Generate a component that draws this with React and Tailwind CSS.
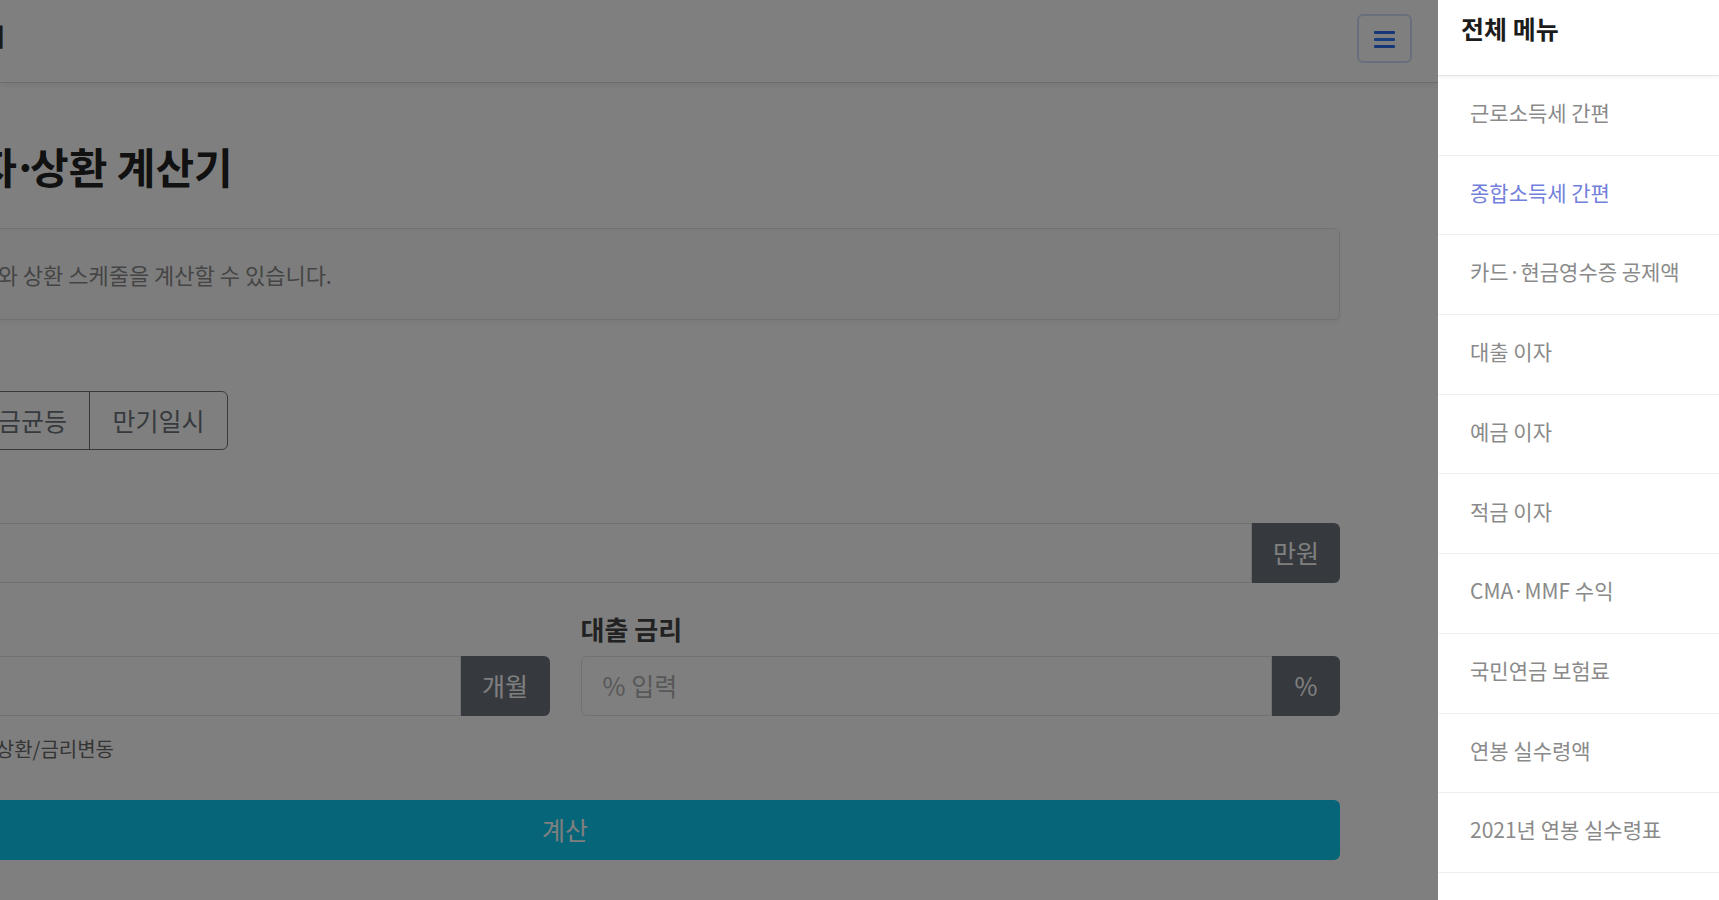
import React from "react";

const menu = [
  "근로소득세 간편",
  "종합소득세 간편",
  "카드·현금영수증 공제액",
  "대출 이자",
  "예금 이자",
  "적금 이자",
  "CMA·MMF 수익",
  "국민연금 보험료",
  "연봉 실수령액",
  "2021년 연봉 실수령표",
];

function Label({ children }) {
  return (
    <div className="mb-[9px] h-[36px] whitespace-nowrap text-[26px] font-bold leading-[36px] text-[#444]">
      {children}
    </div>
  );
}

function InputGroup({ placeholder, unit, unitClass }) {
  return (
    <div className="flex h-[60px] w-full">
      <div className="flex flex-1 items-center rounded-l-md border border-[#dee2e6] bg-white pl-[21px] text-[25px] text-[#b0b0b0]">
        {placeholder}
      </div>
      <div
        className={
          "flex items-center justify-center rounded-r-md bg-[#6c757d] text-[25px] text-white " +
          unitClass
        }
      >
        {unit}
      </div>
    </div>
  );
}

export default function App() {
  return (
    <div className="flex h-[900px] w-full overflow-hidden bg-white font-['Noto_Sans_CJK_KR','Noto_Sans',sans-serif]">
      {/* page under backdrop */}
      <div className="relative min-w-0 flex-1 overflow-hidden bg-white">
        <header className="flex h-[83px] items-start justify-between border-b border-[#d9d9d9] pr-[26px] pt-[14px] shadow-[0_3px_5px_rgba(0,0,0,0.06)]">
          <div className="mt-[4px] flex w-[5px] justify-end overflow-visible">
            <span className="whitespace-nowrap text-[24px] font-bold leading-[36px] text-[#333]">
              금융계산기
            </span>
          </div>
          <button className="flex h-[49px] w-[55px] items-center justify-center rounded-md border-2 border-[#d2dcfa]">
            <svg width="21" height="18" viewBox="0 0 21 18">
              <rect x="0" y="1" width="21" height="3" rx="1" fill="#2b6fef" />
              <rect x="0" y="8" width="21" height="3" rx="1" fill="#2f7bff" />
              <rect x="0" y="15" width="21" height="3" rx="1" fill="#2b6fef" />
            </svg>
          </button>
        </header>

        <main className="-ml-[210px] w-[1550px]">
          <h1 className="mt-[59px] flex whitespace-nowrap text-[42px] font-bold leading-[48px] text-[#222]">
            <span className="flex w-[227px] shrink-0 justify-end">대출 이자</span>
            <span className="-ml-[4px] w-[17px] shrink-0 text-left">·</span>
            <span>상환 계산기</span>
          </h1>

          <div className="mt-[38px] rounded-md border border-[#e3e3e3] bg-[#fbfbfb] px-[20px] py-[30px] text-[22px] leading-[30px] text-[#8a8a8a] shadow-[0_3px_4px_rgba(0,0,0,0.05)]">
            <div className="flex w-[521px] justify-end whitespace-nowrap">
              <span className="shrink-0">대출 조건에 따른 이자와 상환 스케줄을 계산할 수 있습니다.</span>
            </div>
          </div>

          <div className="mt-[26px]">
            <Label>상환 방식</Label>
            <div className="flex">
              <button className="flex w-[163px] justify-center rounded-l-md border border-[#6c757d] bg-[#6c757d] py-[11px] text-[25px] leading-[35px] text-white">
                원리금균등
              </button>
              <button className="-ml-px flex w-[138px] justify-center border border-[#6c757d] py-[11px] text-[25px] leading-[35px] text-[#6c757d]">
                원금균등
              </button>
              <button className="-ml-px flex w-[139px] justify-center rounded-r-md border border-[#6c757d] py-[11px] text-[25px] leading-[35px] text-[#6c757d]">
                만기일시
              </button>
            </div>
          </div>

          <div className="mt-[28px]">
            <Label>대출 금액</Label>
            <InputGroup placeholder="금액 입력" unit="만원" unitClass="w-[88px]" />
          </div>

          <div className="mt-[28px] grid grid-cols-2 gap-x-[31px]">
            <div>
              <Label>대출 기간</Label>
              <InputGroup placeholder="기간 입력" unit="개월" unitClass="w-[89px]" />
            </div>
            <div>
              <Label>대출 금리</Label>
              <InputGroup placeholder="% 입력" unit="%" unitClass="w-[68px]" />
            </div>
          </div>

          <div className="mt-[19px] flex w-[324px] justify-end whitespace-nowrap text-[20px] leading-[27px] text-[#6a6a6a]">
            <span className="shrink-0">※ 참고용 계산이며, 중도상환/금리변동</span>
          </div>

          <button className="mt-[38px] flex h-[60px] w-full items-center justify-center rounded-md bg-[#0dcaf0] text-[25px] text-white">
            계산
          </button>
        </main>

        {/* offcanvas backdrop */}
        <div className="absolute inset-0 bg-black/50" />
      </div>

      {/* offcanvas menu */}
      <aside className="flex w-[281px] shrink-0 flex-col bg-white shadow-[-2px_0_6px_rgba(0,0,0,0.15)]">
        <div className="h-[76px] border-b border-[#e4e4e4] pl-[23px] pt-[12px] shadow-[0_2px_3px_rgba(0,0,0,0.04)]">
          <div className="text-[25px] font-bold leading-[33px] text-[#1c1c1c]">전체 메뉴</div>
        </div>
        <nav className="flex flex-col">
          {menu.map((m, i) => (
            <a
              key={m}
              className={
                "flex h-[79.7px] items-center whitespace-nowrap border-b border-[#efefef] pb-[5px] pl-[32px] text-[21px] " +
                (i === 1 ? "text-[#7280dc]" : "text-[#8a8a8a]")
              }
            >
              {m}
            </a>
          ))}
        </nav>
      </aside>
    </div>
  );
}
